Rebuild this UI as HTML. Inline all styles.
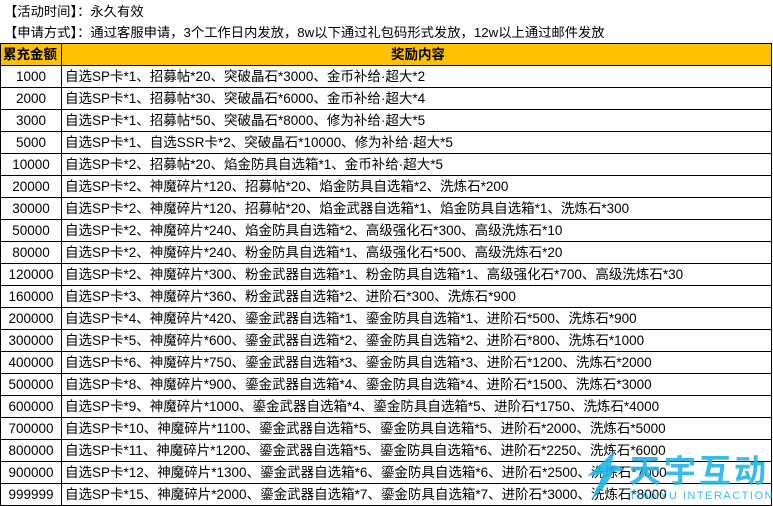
<!DOCTYPE html>
<html><head><meta charset="utf-8"><style>
body{margin:0;width:773px;height:505px;overflow:hidden;background:#fff;font-family:"Liberation Sans","Noto Sans CJK SC",sans-serif;font-size:13.5px;color:#000;position:relative}
.l{position:absolute;left:4px;height:21px;line-height:21px;white-space:nowrap;font-size:13.3px}
table{position:absolute;top:43px;left:0;border-collapse:collapse;width:772px;table-layout:fixed}
td{border:1px solid #000;height:21px;padding:0 0 0 3px;white-space:nowrap;overflow:hidden;line-height:20px}
td:first-child{text-align:center;padding:0}
tr.h td{background:#ffc000;font-weight:bold;text-align:center}
tr.h td:first-child{text-align:left;padding-left:2px}
.logo{position:absolute;left:585px;top:448px;color:#1fb5ec;opacity:.9}
</style></head><body>
<div class="l" style="top:1px">【活动时间】：永久有效</div>
<div class="l" style="top:22px">【申请方式】：通过客服申请，3个工作日内发放，8w以下通过礼包码形式发放，12w以上通过邮件发放</div>
<table>
<col style="width:61px"><col>
<tr class="h"><td>累充金额</td><td>奖励内容</td></tr>
<tr><td>1000</td><td>自选SP卡*1、招募帖*20、突破晶石*3000、金币补给·超大*2</td></tr>
<tr><td>2000</td><td>自选SP卡*1、招募帖*30、突破晶石*6000、金币补给·超大*4</td></tr>
<tr><td>3000</td><td>自选SP卡*1、招募帖*50、突破晶石*8000、修为补给·超大*5</td></tr>
<tr><td>5000</td><td>自选SP卡*1、自选SSR卡*2、突破晶石*10000、修为补给·超大*5</td></tr>
<tr><td>10000</td><td>自选SP卡*2、招募帖*20、焰金防具自选箱*1、金币补给·超大*5</td></tr>
<tr><td>20000</td><td>自选SP卡*2、神魔碎片*120、招募帖*20、焰金防具自选箱*2、洗炼石*200</td></tr>
<tr><td>30000</td><td>自选SP卡*2、神魔碎片*120、招募帖*20、焰金武器自选箱*1、焰金防具自选箱*1、洗炼石*300</td></tr>
<tr><td>50000</td><td>自选SP卡*2、神魔碎片*240、焰金防具自选箱*2、高级强化石*300、高级洗炼石*10</td></tr>
<tr><td>80000</td><td>自选SP卡*2、神魔碎片*240、粉金防具自选箱*1、高级强化石*500、高级洗炼石*20</td></tr>
<tr><td>120000</td><td>自选SP卡*2、神魔碎片*300、粉金武器自选箱*1、粉金防具自选箱*1、高级强化石*700、高级洗炼石*30</td></tr>
<tr><td>160000</td><td>自选SP卡*3、神魔碎片*360、粉金武器自选箱*2、进阶石*300、洗炼石*900</td></tr>
<tr><td>200000</td><td>自选SP卡*4、神魔碎片*420、鎏金武器自选箱*1、鎏金防具自选箱*1、进阶石*500、洗炼石*900</td></tr>
<tr><td>300000</td><td>自选SP卡*5、神魔碎片*600、鎏金武器自选箱*2、鎏金防具自选箱*2、进阶石*800、洗炼石*1000</td></tr>
<tr><td>400000</td><td>自选SP卡*6、神魔碎片*750、鎏金武器自选箱*3、鎏金防具自选箱*3、进阶石*1200、洗炼石*2000</td></tr>
<tr><td>500000</td><td>自选SP卡*8、神魔碎片*900、鎏金武器自选箱*4、鎏金防具自选箱*4、进阶石*1500、洗炼石*3000</td></tr>
<tr><td>600000</td><td>自选SP卡*9、神魔碎片*1000、鎏金武器自选箱*4、鎏金防具自选箱*5、进阶石*1750、洗炼石*4000</td></tr>
<tr><td>700000</td><td>自选SP卡*10、神魔碎片*1100、鎏金武器自选箱*5、鎏金防具自选箱*5、进阶石*2000、洗炼石*5000</td></tr>
<tr><td>800000</td><td>自选SP卡*11、神魔碎片*1200、鎏金武器自选箱*5、鎏金防具自选箱*6、进阶石*2250、洗炼石*6000</td></tr>
<tr><td>900000</td><td>自选SP卡*12、神魔碎片*1300、鎏金武器自选箱*6、鎏金防具自选箱*6、进阶石*2500、洗炼石*7000</td></tr>
<tr><td>999999</td><td>自选SP卡*15、神魔碎片*2000、鎏金武器自选箱*7、鎏金防具自选箱*7、进阶石*3000、洗炼石*8000</td></tr>
</table>
<div class="logo">
<svg width="50" height="55" style="position:absolute;left:0;top:0" viewBox="0 0 50 55"><path d="M30 2 C20 12 10 22 2 28 L18 26 C14 36 10 44 6 52 C16 44 24 34 28 24 L40 22 C34 18 30 16 26 18 Z" fill="#1fb5ec"/></svg>
<div style="position:absolute;left:44px;top:2px;font-size:32px;font-weight:bold;line-height:38px;white-space:nowrap;letter-spacing:3px;font-family:'Noto Sans CJK SC',sans-serif">天宇互动</div>
<div style="position:absolute;left:44px;top:42px;font-size:11px;white-space:nowrap;letter-spacing:1.5px">TIANYU INTERACTION</div>
</div>
</body></html>
